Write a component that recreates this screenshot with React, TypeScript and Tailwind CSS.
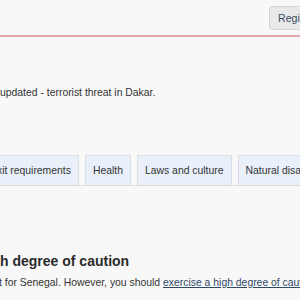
const tabs = ["xit requirements", "Health", "Laws and culture", "Natural disasters"];

const App = () => {
    return (
        <div className="w-[300px] h-[300px] overflow-hidden bg-[#f8f8f8] text-[#333] font-['Liberation_Sans',Arial,sans-serif]">
            <header className="h-[35px] pt-[6px] pl-[269px] flex items-start">
                <button className="shrink-0 h-[24px] px-[8px] rounded-[3px] border border-[#d4d4d8] bg-[#e9e9ec] text-[#3b4a5e] text-[10.6px] leading-none">
                    Register
                </button>
            </header>
            <div className="h-[2px] bg-[#e2a8b2]" />

            <p className="mt-[49px] text-[10.4px] leading-[14px] whitespace-nowrap">
                updated - terrorist threat in Dakar.
            </p>

            <nav className="mt-[55px] -ml-[11px] flex gap-[6px] border-b border-[#dcdcdc] whitespace-nowrap">
                {tabs.map((t) => (
                    <div
                        key={t}
                        className="shrink-0 h-[30px] flex items-center px-[7px] border border-b-0 border-[#dcdfe3] bg-[#e9f0fa] text-[10.4px]"
                    >
                        {t}
                    </div>
                ))}
            </nav>

            <h2 className="mt-[66px] text-[14px] leading-[18px] font-bold text-[#2b2b2b] whitespace-nowrap">
                h degree of caution
            </h2>
            <p className="mt-[6px] -ml-[1px] text-[10.4px] leading-[14px] whitespace-nowrap">
                t for Senegal. However, you should{" "}
                <a className="underline text-[#2f4a66]">exercise a high degree of caution</a>
            </p>
        </div>
    );
};

export default App;
